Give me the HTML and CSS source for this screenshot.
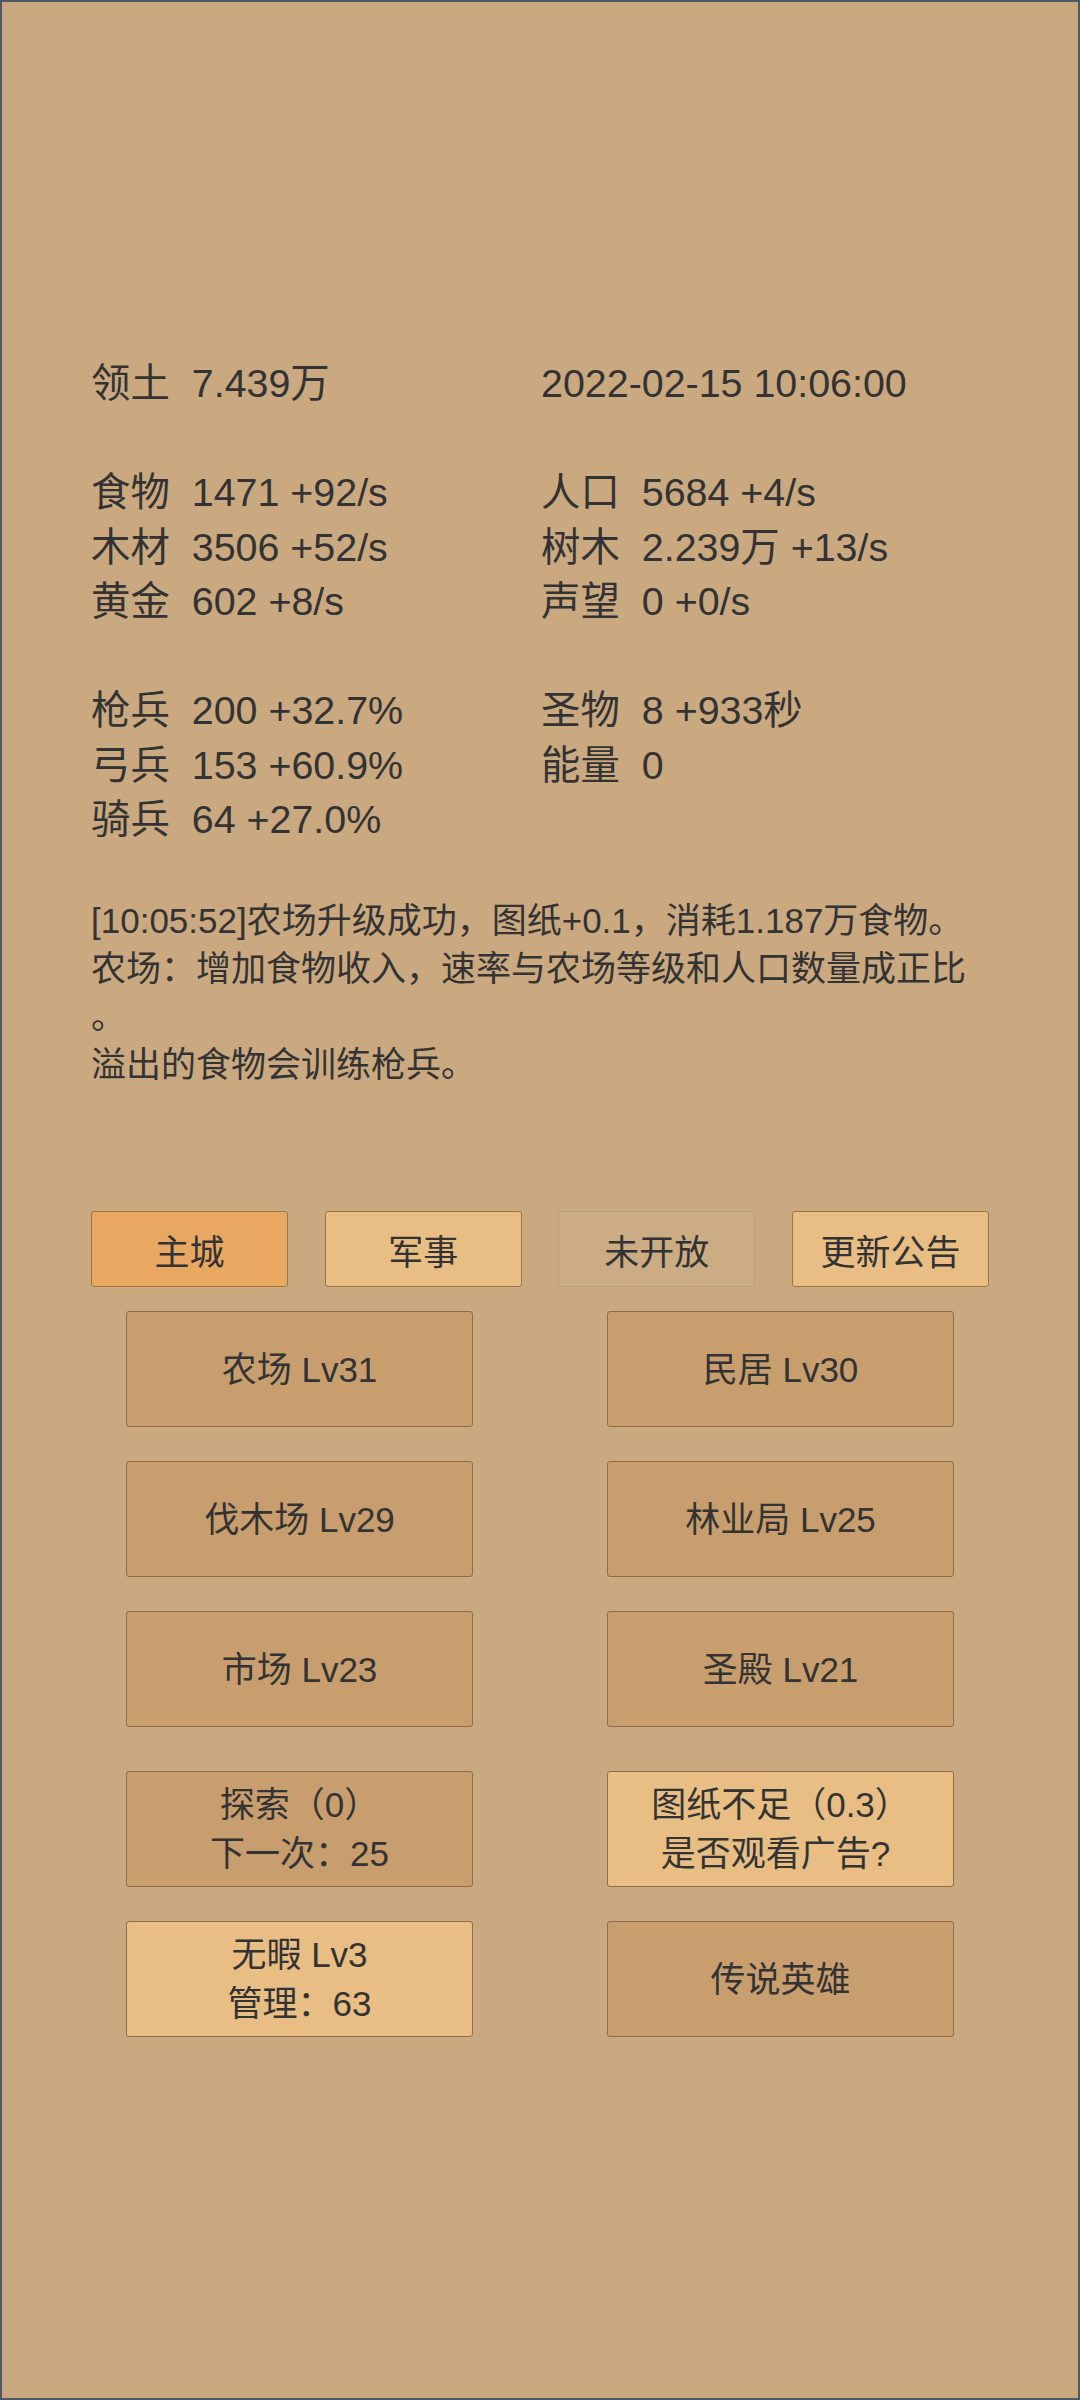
FILE: index.html
```html
<!DOCTYPE html>
<html lang="zh-CN">
<head>
<meta charset="utf-8">
<title>主城</title>
<link rel="stylesheet" href="styles.css">
</head>
<body>
<div class="screen">
  <section class="stats">
    <div class="group">
      <div class="stat"><span class="label">领土</span><span class="value">7.439万</span></div>
      <div class="stat"><span class="value">2022-02-15 10:06:00</span></div>
    </div>
    <div class="group">
      <div class="stat"><span class="label">食物</span><span class="value">1471 +92/s</span></div>
      <div class="stat"><span class="label">人口</span><span class="value">5684 +4/s</span></div>
      <div class="stat"><span class="label">木材</span><span class="value">3506 +52/s</span></div>
      <div class="stat"><span class="label">树木</span><span class="value">2.239万 +13/s</span></div>
      <div class="stat"><span class="label">黄金</span><span class="value">602 +8/s</span></div>
      <div class="stat"><span class="label">声望</span><span class="value">0 +0/s</span></div>
    </div>
    <div class="group">
      <div class="stat"><span class="label">枪兵</span><span class="value">200 +32.7%</span></div>
      <div class="stat"><span class="label">圣物</span><span class="value">8 +933秒</span></div>
      <div class="stat"><span class="label">弓兵</span><span class="value">153 +60.9%</span></div>
      <div class="stat"><span class="label">能量</span><span class="value">0</span></div>
      <div class="stat"><span class="label">骑兵</span><span class="value">64 +27.0%</span></div>
    </div>
  </section>

  <div class="log">
    <div class="log-line">[10:05:52]农场升级成功，图纸+0.1，消耗1.187万食物。</div>
    <div class="log-line">农场：增加食物收入，速率与农场等级和人口数量成正比</div>
    <div class="log-line">。</div>
    <div class="log-line">溢出的食物会训练枪兵。</div>
  </div>

  <nav class="tabs">
    <div class="tab tab-active">主城</div>
    <div class="tab tab-light">军事</div>
    <div class="tab tab-off">未开放</div>
    <div class="tab tab-light">更新公告</div>
  </nav>

  <div class="buildings">
    <div class="bld">农场 Lv31</div>
    <div class="bld">民居 Lv30</div>
    <div class="bld">伐木场 Lv29</div>
    <div class="bld">林业局 Lv25</div>
    <div class="bld">市场 Lv23</div>
    <div class="bld">圣殿 Lv21</div>
    <div class="bld bld-sep"><span>探索（0）</span><span>下一次：25</span></div>
    <div class="bld bld-sep bld-light"><span>图纸不足（0.3）</span><span class="trail">是否观看广告?</span></div>
    <div class="bld bld-light"><span>无暇 Lv3</span><span>管理：63</span></div>
    <div class="bld">传说英雄</div>
  </div>
</div>
</body>
</html>
```

FILE: styles.css
```css
html, body {
  margin: 0;
  padding: 0;
}

body {
  font-family: "Liberation Sans", "Noto Sans CJK SC", sans-serif;
  color: #333333;
  background: #caa981;
}

.screen {
  width: 1080px;
  height: 2400px;
  box-sizing: border-box;
  border: 2px solid #4f5866;
  background: #caa981;
  padding-top: 354px;
  overflow: hidden;
}

.stats {
  margin-left: 89px;
  font-size: 39.4px;
  line-height: 54.5px;
}

.group {
  display: grid;
  grid-template-columns: 450px 450px;
}

.group + .group {
  margin-top: 54.5px;
}

.stat {
  display: flex;
  white-space: nowrap;
}

.label {
  margin-right: 22px;
}

.log {
  margin-top: 50.5px;
  margin-left: 89px;
  font-size: 35px;
  line-height: 48px;
  white-space: nowrap;
}

.tabs {
  margin-top: 122px;
  margin-left: 89px;
  width: 898px;
  display: flex;
  justify-content: space-between;
}

.tab {
  width: 197px;
  height: 76px;
  box-sizing: border-box;
  border: 1.5px solid #9a7548;
  border-radius: 3px;
  display: flex;
  align-items: center;
  justify-content: center;
  font-size: 35px;
}

.tab-active {
  background: #e9a862;
}

.tab-light {
  background: #e8be85;
}

.tab-off {
  background: #ccac85;
  border-color: #bd9f78;
}

.buildings {
  margin-top: 24px;
  margin-left: 124px;
  display: grid;
  grid-template-columns: 347px 347px;
  column-gap: 134px;
  row-gap: 34px;
}

.bld {
  height: 116px;
  box-sizing: border-box;
  border: 1.5px solid #8f6d45;
  border-radius: 3px;
  background: #c89e6e;
  display: flex;
  flex-direction: column;
  align-items: center;
  justify-content: center;
  font-size: 35px;
  line-height: 49px;
  white-space: nowrap;
}

.bld-sep {
  margin-top: 10px;
}

.bld-light {
  background: #e8be85;
}

.trail {
  padding-right: 10px;
}
```
